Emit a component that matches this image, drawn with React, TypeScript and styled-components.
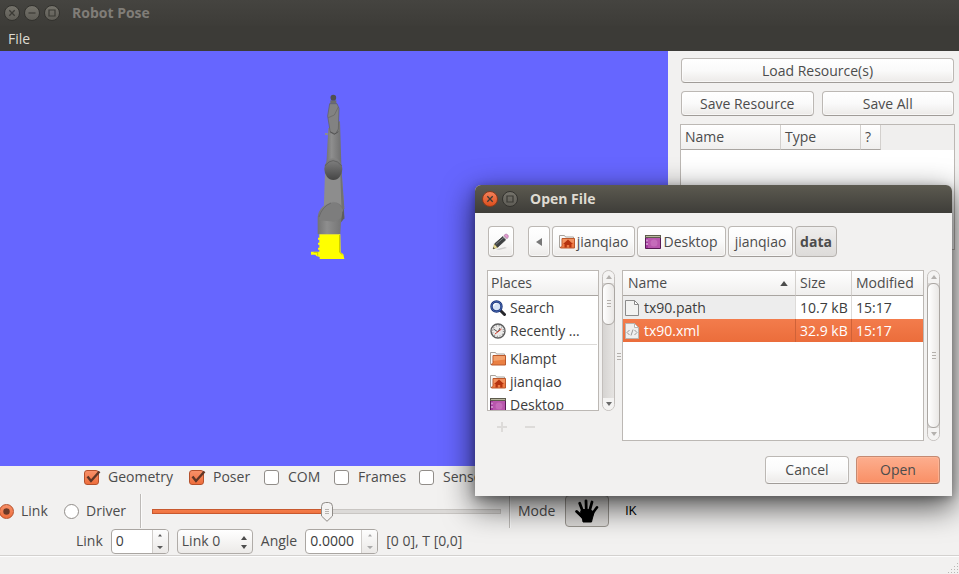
import React, { useState } from "react";
import styled, { createGlobalStyle, css } from "styled-components";

const font = `"Open Sans", "Noto Sans", sans-serif`;
const ink = "#4c4c4c";
const face = "#f2f1f0";

const GlobalStyle = createGlobalStyle`
  *, *::before, *::after { box-sizing: border-box; }
  html, body { margin: 0; padding: 0; }
  body { background: ${face}; color: ${ink}; font: 14px/20px ${font}; overflow: hidden; }
  button, input, select { font: inherit; color: inherit; margin: 0; }
  svg { display: block; flex: none; }
`;

/* ---------- shared controls ---------- */

const Button = styled.button<{ $tone?: "accent" | "pressed"; $width?: number; $height?: number; $grow?: boolean }>`
  display: flex;
  align-items: center;
  justify-content: center;
  gap: 2px;
  height: ${(p) => p.$height ?? 25}px;
  ${(p) => p.$width && css`width: ${p.$width}px;`}
  ${(p) => p.$grow && css`flex: 1;`}
  padding: 0;
  white-space: nowrap;
  border: 1px solid #bcb8b4;
  border-bottom-color: #a09c98;
  border-radius: 4px;
  background: linear-gradient(#fff, #fafafa 50%, #eceae8);
  box-shadow: inset 0 0 0 1px rgba(255, 255, 255, 0.6);
  ${(p) =>
    p.$tone === "accent" &&
    css`
      border-color: #c58a72;
      border-bottom-color: #9c6a56;
      background: linear-gradient(#fdae8e, #f98f65);
      box-shadow: inset 0 0 0 1px rgba(255, 190, 160, 0.6);
    `}
  ${(p) =>
    p.$tone === "pressed" &&
    css`
      font-weight: 700;
      border-color: #b5b1ad;
      background: linear-gradient(#efeeed, #dddbd9);
      box-shadow: none;
    `}
`;

const Caption = styled.span`
  white-space: nowrap;
`;

const Divider = styled.span`
  width: 2px;
  height: 34px;
  border-left: 1px solid #bdbab7;
  border-right: 1px solid #fbfbfb;
`;

/* ---------- application window ---------- */

const Window = styled.div`
  position: relative;
  display: flex;
  flex-direction: column;
  min-height: 100vh;
`;

const TitleBar = styled.header<{ $dialog?: boolean }>`
  display: flex;
  align-items: center;
  gap: 4px;
  height: ${(p) => (p.$dialog ? 28 : 26)}px;
  padding: 0 ${(p) => (p.$dialog ? 7 : 4)}px;
  background: ${(p) => (p.$dialog ? "linear-gradient(#5c5a50, #3e3d39)" : "linear-gradient(#454440, #3d3c38)")};
  border-radius: ${(p) => (p.$dialog ? "6px 6px 0 0" : "0")};
  color: ${(p) => (p.$dialog ? "#dfdbd2" : "#807d78")};
`;

const Title = styled.h1`
  margin: 0 0 0 8px;
  font: 700 14px/20px ${font};
`;

const WindowButton = styled.button<{ $close?: boolean }>`
  display: grid;
  place-items: center;
  width: 16px;
  height: 16px;
  padding: 0;
  border: 1px solid ${(p) => (p.$close ? "#8c3a1c" : "#33322e")};
  border-radius: 50%;
  background: ${(p) => (p.$close ? "linear-gradient(#f4815a, #dd4f1d)" : "linear-gradient(#75736b, #5f5d56)")};
  color: #3b3a35;
`;

const MenuBar = styled.nav`
  display: flex;
  align-items: center;
  height: 25px;
  padding: 0 8px;
  background: #3c3b37;
`;

const MenuItem = styled.button`
  padding: 0;
  border: 0;
  background: none;
  && { color: #dfdbd2; }
`;

const Body = styled.div`
  flex: 1;
  display: grid;
  grid-template-columns: minmax(0, 1fr) 291px;
`;

const Workspace = styled.main`
  display: flex;
  flex-direction: column;
`;

const Viewport = styled.div`
  flex: 1;
  display: flex;
  justify-content: center;
  align-items: flex-start;
  padding-top: 34px;
  background: #6666ff;
`;

const SidePanel = styled.aside`
  display: flex;
  flex-direction: column;
  gap: 8px;
  padding: 7px 4px 0 12px;
`;

const ButtonRow = styled.div`
  display: flex;
  gap: 8px;
  padding: 0 1px;
`;

const ResourceBox = styled.div`
  height: 126px;
  background: #fff;
  border: 1px solid #bcb8b4;
`;

const ResourceTable = styled.table`
  width: 100%;
  border-collapse: separate;
  border-spacing: 0;
  table-layout: fixed;
`;

const HeadCell = styled.th<{ $width?: number }>`
  ${(p) => p.$width && css`width: ${p.$width}px;`}
  height: 25px;
  padding: 0 4px;
  text-align: left;
  font-weight: 400;
  white-space: nowrap;
  border-right: 1px solid #d3d0cd;
  border-bottom: 1px solid #a9a5a1;
  background: linear-gradient(#fff, #f0efee);
`;

const BlankHead = styled.td`
  background: #f0efee;
`;

/* ---------- control strip ---------- */

const Controls = styled.section`
  display: flex;
  flex-direction: column;
`;

const CheckRow = styled.div`
  display: grid;
  grid-template-columns: 105px 75px 70px 85px 100px;
  align-items: center;
  height: 22px;
  padding-left: 84px;
`;

const Check = styled.label`
  display: flex;
  align-items: center;
  gap: 7px;
`;

const Mark = styled.span`
  display: grid;
  > * { grid-area: 1 / 1; }
  > svg { pointer-events: none; visibility: hidden; }
  > input:checked + svg { visibility: visible; }
`;

const Box = styled.input`
  appearance: none;
  width: 15px;
  height: 15px;
  border: 1px solid #918d89;
  border-radius: ${(p) => (p.type === "radio" ? "50%" : "3px")};
  background: #fff;
  &:checked {
    border-color: #b5512c;
    background: linear-gradient(#f79069, #ee6e3c);
  }
`;

const PoseRow = styled.div`
  display: flex;
  align-items: center;
  height: 34px;
  margin-top: 6px;
  padding-right: 15px;
`;

const RadioGroup = styled.div`
  display: grid;
  grid-template-columns: 65px 76px;
  margin-left: -1px;
`;

const Slider = styled.input<{ $fill: number }>`
  appearance: none;
  flex: 1;
  min-width: 0;
  height: 20px;
  && { margin: 0 8px 0 10px; }
  background: none;
  &::-webkit-slider-runnable-track {
    height: 5px;
    border: 1px solid #bdb9b5;
    border-radius: 3px;
    background: linear-gradient(#f5804e, #ef6f3c) 0 0 / ${(p) => p.$fill}% 100% no-repeat border-box, #dcdad8;
    border-color: #c9c6c3;
    ${(p) => css`border-image: linear-gradient(to right, #c8592f ${p.$fill}%, #c9c6c3 ${p.$fill}%) 1;`}
  }
  &::-webkit-slider-thumb {
    appearance: none;
    width: 12px;
    height: 20px;
    margin-top: -8px;
    background:
      linear-gradient(#b8b4b0, #b8b4b0) 4px 7px / 4px 1px no-repeat,
      linear-gradient(#b8b4b0, #b8b4b0) 4px 9px / 4px 1px no-repeat,
      linear-gradient(#b8b4b0, #b8b4b0) 4px 11px / 4px 1px no-repeat,
      url("data:image/svg+xml,%3Csvg xmlns='http://www.w3.org/2000/svg' width='12' height='20'%3E%3Cpath d='M.5 4.5a4 4 0 0 1 4-4h3a4 4 0 0 1 4 4V14L6 19.3.5 14z' fill='%23f4f3f2' stroke='%238f8b87'/%3E%3C/svg%3E") no-repeat;
  }
`;

const ModeGroup = styled.div`
  display: flex;
  align-items: center;
`;

const ModeLabel = styled.span`
  width: 54px;
  padding-left: 7px;
`;

const ModeButton = styled.button<{ $active?: boolean }>`
  display: grid;
  place-items: center;
  width: 44px;
  height: 32px;
  padding: 0;
  border: 1px solid ${(p) => (p.$active ? "#99958f" : "transparent")};
  border-radius: 4px;
  background: ${(p) => (p.$active ? "#dcdad8" : "none")};
  && {
    color: #000;
    font: 12px/16px "Liberation Sans", sans-serif;
  }
`;

const JointRow = styled.div`
  display: flex;
  align-items: center;
  gap: 8px;
  height: 26px;
  margin: 0 0 1px 76px;
`;

const Field = styled.label`
  display: flex;
  align-items: center;
  gap: 8px;
`;

const Spin = styled.span<{ $width: number }>`
  display: flex;
  width: ${(p) => p.$width}px;
  height: 25px;
  overflow: hidden;
  border: 1px solid #aaa6a2;
  border-radius: 4px;
  background: #fff;
`;

const SpinInput = styled.input`
  flex: 1;
  min-width: 0;
  padding: 0 4px;
  border: 0;
  background: none;
  && { color: #3c3c3c; }
`;

const SpinArrows = styled.span<{ $dim?: boolean }>`
  display: grid;
  place-items: center;
  width: 16px;
  border-left: 1px solid #d0cdca;
  background: linear-gradient(#fdfdfd, #ebe9e7);
  color: ${(p) => (p.$dim ? "#aaa" : "#5a5a5a")};
`;

const Combo = styled.span`
  display: grid;
  align-items: center;
  width: 76px;
  > * { grid-area: 1 / 1; }
  > svg { justify-self: end; margin-right: 5px; pointer-events: none; }
`;

const ComboSelect = styled.select`
  appearance: none;
  height: 25px;
  padding: 0 4px;
  border: 1px solid #b0aca8;
  border-radius: 4px;
  background: linear-gradient(#fff, #eceae8);
`;

const StatusBar = styled.footer`
  display: flex;
  justify-content: flex-end;
  align-items: flex-end;
  height: 19px;
  border-top: 1px solid #d3d1cf;
  box-shadow: inset 0 1px 0 #fdfdfd;
`;

/* ---------- file chooser ---------- */

const Dialog = styled.section`
  position: absolute;
  left: 475px;
  top: 185px;
  width: 477px;
  border-radius: 6px 6px 0 0;
  background: ${face};
  box-shadow: 0 10px 30px 2px rgba(0, 0, 0, 0.65), 0 2px 8px rgba(0, 0, 0, 0.25);
`;

const DialogBody = styled.div`
  display: flex;
  flex-direction: column;
  padding: 13px 12px 12px;
`;

const PathBar = styled.div`
  display: flex;
  gap: 2px;
  margin-left: 1px;
`;

const PencilSlot = styled.span`
  margin-right: 12px;
`;

const Panes = styled.div`
  display: flex;
  margin-top: 13px;
`;

const PlacesPane = styled.div`
  width: 112px;
`;

const PlacesBox = styled.div`
  height: 141px;
  overflow: hidden;
  border: 1px solid #bcb8b4;
  background: #fff;
`;

const PlacesHead = styled.div`
  height: 25px;
  padding: 2px 3px;
  border-bottom: 1px solid #a9a5a1;
  background: linear-gradient(#fff, #f0efee);
`;

const PlacesList = styled.ul`
  margin: 0;
  padding: 0;
  list-style: none;
`;

const Place = styled.li<{ $first?: boolean }>`
  display: flex;
  align-items: center;
  gap: 4px;
  height: 23px;
  padding-left: 2px;
  white-space: nowrap;
  color: #3c3c3c;
`;

const PlaceRule = styled.li`
  height: 1px;
  margin: 2px 1px;
  background: #dcdad8;
`;

const PlaceTools = styled.div`
  display: flex;
  gap: 16px;
  padding: 10px 9px;
`;

const ToolButton = styled.button`
  display: grid;
  width: 12px;
  height: 12px;
  padding: 0;
  border: 0;
  background: none;
`;

const ScrollTrack = styled.div`
  display: flex;
  flex-direction: column;
  align-items: center;
  width: 13px;
  border: 1px solid #c3bfbc;
  border-radius: 7px;
  background: linear-gradient(to right, #d6d4d2, #e6e4e2);
`;

const ScrollEnd = styled.span<{ $bottom?: boolean; $dim?: boolean }>`
  display: grid;
  place-items: center;
  width: 11px;
  height: 12px;
  background: #f4f3f2;
  border-radius: ${(p) => (p.$bottom ? "0 0 6px 6px" : "6px 6px 0 0")};
  color: ${(p) => (p.$dim ? "#b4b1ae" : "#6a6a6a")};
`;

const ScrollThumb = styled.span<{ $size?: number }>`
  display: grid;
  place-items: center;
  width: 13px;
  ${(p) => (p.$size ? css`height: ${p.$size}px; margin-bottom: auto;` : css`flex: 1;`)}
  border: 1px solid #aaa6a2;
  border-radius: 6px;
  background: linear-gradient(to right, #fff, #e9e7e5);
`;

const PlacesScroll = styled.div`
  display: flex;
  height: 141px;
  margin-left: 3px;
`;

const Grip = styled.div`
  display: grid;
  place-items: center;
  width: 7px;
`;

const FilesBox = styled.div`
  flex: 1;
  height: 171px;
  border: 1px solid #bcb8b4;
  background: #fff;
`;

const FilesScroll = styled.div`
  display: flex;
  height: 171px;
  margin-left: 3px;
`;

const FilesTable = styled(ResourceTable)`
  th:last-child, td:last-child { border-right: 0; }
`;

const HeadInner = styled.span`
  display: flex;
  align-items: center;
  justify-content: space-between;
  padding: 0 3px 0 1px;
`;

const FileRow = styled.tr<{ $selected?: boolean }>`
  color: ${(p) => (p.$selected ? "#fff" : "#3c3c3c")};
  background: ${(p) => (p.$selected ? "linear-gradient(#f37c4c, #eb6d3b)" : "#fff")};
  td:first-child { ${(p) => !p.$selected && css`background: #ededed;`} }
  td { border-right: 1px solid ${(p) => (p.$selected ? "#cf6238" : "#dddbd9")}; }
`;

const Cell = styled.td`
  height: 23px;
  padding: 0 4px;
  white-space: nowrap;
`;

const FileName = styled.span`
  display: flex;
  align-items: center;
  gap: 5px;
  margin-left: -2px;
`;

const Actions = styled.div`
  display: flex;
  justify-content: flex-end;
  gap: 7px;
  margin-top: 13px;
`;

/* ---------- drawings ---------- */

const Cross = () => (
  <svg width="8" height="8" viewBox="0 0 8 8" stroke="currentColor" strokeWidth="1.3"><path d="M1.3 1.3l5.4 5.4M6.7 1.3L1.3 6.7" /></svg>
);
const Dash = () => (
  <svg width="8" height="8" viewBox="0 0 8 8" stroke="currentColor" strokeWidth="1.2"><path d="M.5 4h7" /></svg>
);
const Square = () => (
  <svg width="8" height="8" viewBox="0 0 8 8" fill="none" stroke="currentColor" strokeWidth="1.2"><path d="M1 1h6v6H1z" /></svg>
);
const Arrow = ({ down, size = 6 }: { down?: boolean; size?: number }) => (
  <svg width={size} height={size / 2 + 1} viewBox="0 0 6 4" fill="currentColor"><path d={down ? "M0 0h6L3 4z" : "M0 4h6L3 0z"} /></svg>
);
const UpDown = ({ wide }: { wide?: boolean }) => (
  <svg width="8" height="18" viewBox="0 0 8 18" fill="currentColor">
    {wide ? <path d="M1 8h6L4 4zM1 13h6l-3 4z" /> : <path d="M2 4.500h4L4 2zM1 14h6l-3 3z" />}
  </svg>
);
const Lines = ({ width = 4, height = 8 }: { width?: number; height?: number }) => (
  <svg width={width} height={height} viewBox="0 0 4 8" stroke="#b4b0ac"><path d="M0 .5h4M0 3.500h4M0 6.500h4" /></svg>
);
const Tick = () => (
  <svg width="17" height="15" viewBox="0 0 17 15" fill="none" stroke="#5f3626" strokeWidth="2.400"><path d="M3.500 6.500l3.500 4.500 8.500-9.500" /></svg>
);
const Dot = () => (
  <svg width="15" height="15" viewBox="0 0 15 15"><circle cx="7.500" cy="7.500" r="3.200" fill="#6b3a28" /></svg>
);
const Pencil = () => (
  <svg width="18" height="18" viewBox="0 0 18 18">
    <path d="M4 16.200l9-2.200 2 1-8 2z" fill="#000" opacity=".15" />
    <path d="M1 16l1.500-5 3 3.400z" fill="#efe39a" stroke="#a89c55" strokeWidth=".6" />
    <path d="M1 16l.6-2 1.300 1.400z" fill="#333" />
    <path d="M2.600 10.800L10.800 3.600l3 3.200-8.200 7.500z" fill="#3e4143" stroke="#222" strokeWidth=".6" />
    <path d="M4 11.200l8-6.800" stroke="#85898c" strokeWidth=".9" />
    <path d="M10.800 3.600l1.300-1.200 3 3.200-1.300 1.200z" fill="#c9c9c9" />
    <path d="M12.100 2.400c1.200-1.500 2.500-1.600 3.500-.6s.9 2.500-.5 3.800z" fill="#e49bd2" stroke="#9d5d90" strokeWidth=".6" />
  </svg>
);
const Folder = ({ home }: { home?: boolean }) => (
  <svg width="16" height="16" viewBox="0 0 16 16">
    <path d="M.5 13.500v-12h5l1 1.500h8v10.500z" fill="#fafafa" stroke="#a8a29c" />
    <path d="M3 4.500h12.500v9.500H1.500V13c1.200 0 1.500-1 1.500-2z" fill={home ? "#ee7a45" : "#ea8043"} stroke="#b9582c" />
    <path d="M3.500 5h11.500v3.500L3.500 10z" fill="#f8b183" opacity={home ? 0.4 : 0.65} />
    {home && <path d="M9 5.500L4 10h1.500v3.500h2.300V11h2.400v2.500h2.300V10H14z" fill="#b5330f" />}
  </svg>
);
const DesktopIcon = () => (
  <svg width="16" height="14" viewBox="0 0 16 14">
    <path d="M.5.500h15v13H.5z" fill="#a43aa0" stroke="#581a55" />
    <path d="M3 3h12v10H3z" fill="#b856ad" />
    <circle cx="9" cy="8" r="3.500" fill="#cf80c4" opacity=".55" />
    <path d="M0 0h16v3H0z" fill="#5d5b4c" /><path d="M1 1h14v1H1z" fill="#b8b69e" />
    <path d="M1.500 4.500h1v2h-1zM1.500 8h1v2h-1z" fill="#f1dff0" />
  </svg>
);
const SearchIcon = () => (
  <svg width="16" height="16" viewBox="0 0 16 16">
    <path d="M10 10l4.500 4.500" stroke="#26262b" strokeWidth="3" strokeLinecap="round" />
    <circle cx="6.500" cy="6.500" r="5" fill="#d5e2f5" stroke="#1d3678" strokeWidth="2.400" />
    <circle cx="6.500" cy="6.500" r="5" fill="none" stroke="#4b6dbb" strokeWidth=".8" />
    <path d="M3.600 6.200a3 3 0 0 1 3-2.700" fill="none" stroke="#fff" strokeWidth="1.200" />
  </svg>
);
const Clock = () => (
  <svg width="16" height="16" viewBox="0 0 16 16">
    <circle cx="8" cy="8" r="7" fill="#ecebea" stroke="#5d5d5d" strokeWidth="1.400" />
    <circle cx="8" cy="8" r="5.400" fill="none" stroke="#888" strokeWidth="1.200" strokeDasharray="1 1.830" />
    <path d="M3.500 6l4.500 3 2-4" fill="none" stroke="#555" />
    <path d="M5 11l6.500-5" stroke="#d9402f" />
  </svg>
);
const Sheet = ({ code }: { code?: boolean }) => (
  <svg width="14" height="16" viewBox="0 0 14 16">
    <path d="M.5.500h9l4 4v11H.5z" fill={code ? "#efefee" : "#f3f3f2"} stroke={code ? "#b9b5b1" : "#8b8b8b"} />
    <path d="M9.500.500v4h4z" fill="#fff" stroke={code ? "#b9b5b1" : "#8b8b8b"} />
    {code && <path d="M4.500 7L2 9.500 4.500 12M9.500 7L12 9.500 9.500 12M8 6.500l-2 6" fill="none" stroke="#999" />}
  </svg>
);
const Hand = () => (
  <svg width="24" height="24" viewBox="0 0 24 24" fill="none" stroke="#000" strokeLinecap="round">
    <path d="M8 13L4.700 4.200" strokeWidth="2.800" />
    <path d="M11.300 12L11 1.800" strokeWidth="2.800" />
    <path d="M14.500 12l2.500-9" strokeWidth="2.800" />
    <path d="M17 15l5-6.700" strokeWidth="2.600" />
    <path d="M8 18.500l-6.300-6" strokeWidth="3" />
    <path d="M7 10.500l9 .2 3 3-1.800 6.300-.7 3H8l-.5-3.200L4.500 16z" fill="#000" strokeWidth="1" />
  </svg>
);
const SizeGrip = () => (
  <svg width="11" height="11" viewBox="0 0 11 11" fill="#bab7b4">
    {[0, 1, 2, 3].flatMap((r) =>
      Array.from({ length: r + 1 }, (_, c) => <rect key={`${r}-${c}`} x={9 - c * 3} y={r * 3} width="1" height="1" />)
    )}
  </svg>
);
const Robot = () => (
  <svg width="90" height="185" viewBox="0 0 270 555" role="img" aria-label="Robot arm">
    <defs>
      <linearGradient id="arm"><stop offset="0" stopColor="#747474" /><stop offset=".35" stopColor="#8e8e8e" /><stop offset="1" stopColor="#6f6f6f" /></linearGradient>
      <linearGradient id="joint" x2="0" y2="1"><stop offset="0" stopColor="#858585" /><stop offset="1" stopColor="#454545" /></linearGradient>
    </defs>
    <path d="M124 46h18v10h-18z" fill="#6c6c6c" />
    <circle cx="133" cy="38" r="8.500" fill="#505050" />
    <path d="M108 144h8v6h-8z" fill="#8d8d8d" />
    <path d="M118 130l-6 108h45l-4-130z" fill="url(#arm)" />
    <path d="M122 56h22l6 14-2 62-8 14-16-3-8-50z" fill="#828282" stroke="#5e5e5e" strokeWidth="2" />
    <path d="M118 98l18-8 12-24" fill="none" stroke="#626262" strokeWidth="2" />
    <path d="M124 140l12 8 12-8" fill="none" stroke="#555" strokeWidth="3" />
    <path d="M108 262h50l8 108-62 12z" fill="#8d8d8d" />
    <path d="M154 270l4-8 8 108-8 16z" fill="#727272" />
    <ellipse cx="133" cy="252" rx="27" ry="33" fill="url(#joint)" />
    <path d="M108 242q24-30 50 0" fill="none" stroke="#555" strokeWidth="2" />
    <path d="M86 448v-52q2-18 14-30 14-15 33-16 22 2 32 24l1 24-10 14-2 36z" fill="url(#arm)" />
    <path d="M90 392q6-22 24-34 20-10 38 2l12 18-6 20-22 12-44-4z" fill="#7d7d7d" />
    <path d="M90 396q10-32 36-42" fill="none" stroke="#5f5f5f" strokeWidth="2" />
    <path d="M164 372l2 28-10 12 4-30z" fill="#5e5e5e" />
    <path d="M91 448h63l1 54 8 6 3 14H92v-6l-10-3-3-4H66v-9h25v-6h-4v-6h4v-9h-4v-6h4v-9h-4v-6h4z" fill="#ff0" />
    <path d="M152 450v52l8 7" fill="none" stroke="#a3a300" strokeWidth="2" />
    <path d="M74 502h12v10" fill="none" stroke="#b4b400" strokeWidth="2" />
  </svg>
);

/* ---------- composed parts ---------- */

const Option = ({ type = "checkbox", name, label, on }: { type?: string; name?: string; label: string; on?: boolean }) => (
  <Check>
    <Mark>
      <Box type={type} name={name} defaultChecked={on} />
      {type === "radio" ? <Dot /> : <Tick />}
    </Mark>
    <Caption>{label}</Caption>
  </Check>
);

const ScrollBar = ({ thumb, atEnd }: { thumb?: number; atEnd?: boolean }) => (
  <ScrollTrack>
    <ScrollEnd $dim><Arrow /></ScrollEnd>
    <ScrollThumb $size={thumb}><Lines /></ScrollThumb>
    <ScrollEnd $bottom $dim={atEnd}><Arrow down /></ScrollEnd>
  </ScrollTrack>
);

const SpinBox = ({ width, value, label, dim }: { width: number; value: string; label: string; dim?: boolean }) => (
  <Spin $width={width}>
    <SpinInput aria-label={label} defaultValue={value} inputMode="decimal" />
    <SpinArrows $dim={dim}><UpDown /></SpinArrows>
  </Spin>
);

const places = [
  { label: "Search", icon: <SearchIcon /> },
  { label: "Recently …", icon: <Clock /> },
  null,
  { label: "Klampt", icon: <Folder /> },
  { label: "jianqiao", icon: <Folder home /> },
  { label: "Desktop", icon: <DesktopIcon /> },
];

const files = [
  { name: "tx90.path", size: "10.7 kB", modified: "15:17" },
  { name: "tx90.xml", size: "32.9 kB", modified: "15:17", code: true },
];

const OpenDialog = () => {
  const [selected, setSelected] = useState("tx90.xml");
  return (
    <Dialog role="dialog" aria-label="Open File">
      <TitleBar $dialog>
        <WindowButton $close aria-label="Close"><Cross /></WindowButton>
        <WindowButton aria-label="Maximize"><Square /></WindowButton>
        <Title as="h2">Open File</Title>
      </TitleBar>
      <DialogBody>
        <PathBar>
          <PencilSlot><Button $width={26} $height={31} aria-label="Type a file name"><Pencil /></Button></PencilSlot>
          <Button $width={22} $height={31} aria-label="Back">
            <svg width="6" height="8" viewBox="0 0 6 8" fill="#777"><path d="M6 0v8L0 4z" /></svg>
          </Button>
          <Button $width={83} $height={31}><Folder home />jianqiao</Button>
          <Button $width={89} $height={31}><DesktopIcon />Desktop</Button>
          <Button $width={65} $height={31}>jianqiao</Button>
          <Button $width={42} $height={31} $tone="pressed">data</Button>
        </PathBar>
        <Panes>
          <PlacesPane>
            <PlacesBox>
              <PlacesHead>Places</PlacesHead>
              <PlacesList>
                {places.map((p, i) => (p ? <Place key={i}>{p.icon}{p.label}</Place> : <PlaceRule key={i} />))}
              </PlacesList>
            </PlacesBox>
            <PlaceTools>
              <ToolButton aria-label="Add bookmark">
                <svg width="12" height="12" viewBox="0 0 12 12" stroke="#dddbd9" strokeWidth="2"><path d="M1 6h10M6 1v10" /></svg>
              </ToolButton>
              <ToolButton aria-label="Remove bookmark">
                <svg width="12" height="12" viewBox="0 0 12 12" stroke="#dddbd9" strokeWidth="2"><path d="M1 6h10" /></svg>
              </ToolButton>
            </PlaceTools>
          </PlacesPane>
          <PlacesScroll><ScrollBar thumb={42} /></PlacesScroll>
          <Grip><Lines width={4} height={8} /></Grip>
          <FilesBox>
            <FilesTable>
              <thead>
                <tr>
                  <HeadCell><HeadInner>Name<Arrow size={8} /></HeadInner></HeadCell>
                  <HeadCell $width={56}>Size</HeadCell>
                  <HeadCell $width={71}>Modified</HeadCell>
                </tr>
              </thead>
              <tbody>
                {files.map((f) => (
                  <FileRow key={f.name} $selected={f.name === selected} onClick={() => setSelected(f.name)}>
                    <Cell><FileName><Sheet code={f.code} />{f.name}</FileName></Cell>
                    <Cell>{f.size}</Cell>
                    <Cell>{f.modified}</Cell>
                  </FileRow>
                ))}
              </tbody>
            </FilesTable>
          </FilesBox>
          <FilesScroll><ScrollBar atEnd /></FilesScroll>
        </Panes>
        <Actions>
          <Button $width={84} $height={28}>Cancel</Button>
          <Button $width={84} $height={28} $tone="accent">Open</Button>
        </Actions>
      </DialogBody>
    </Dialog>
  );
};

export default function App() {
  const [pose, setPose] = useState(50);
  return (
    <Window>
      <GlobalStyle />
      <TitleBar>
        <WindowButton aria-label="Close"><Cross /></WindowButton>
        <WindowButton aria-label="Minimize"><Dash /></WindowButton>
        <WindowButton aria-label="Maximize"><Square /></WindowButton>
        <Title>Robot Pose</Title>
      </TitleBar>
      <MenuBar><MenuItem>File</MenuItem></MenuBar>
      <Body>
        <Workspace>
          <Viewport><Robot /></Viewport>
          <Controls>
            <CheckRow>
              <Option label="Geometry" on />
              <Option label="Poser" on />
              <Option label="COM" />
              <Option label="Frames" />
              <Option label="Sensors" />
            </CheckRow>
            <PoseRow>
              <RadioGroup>
                <Option type="radio" name="target" label="Link" on />
                <Option type="radio" name="target" label="Driver" />
              </RadioGroup>
              <Divider />
              <Slider
                type="range"
                aria-label="Joint position"
                value={pose}
                $fill={pose}
                onChange={(e) => setPose(Number(e.target.value))}
              />
              <ModeGroup>
                <Divider />
                <ModeLabel>Mode</ModeLabel>
                <ModeButton $active aria-label="Pose mode"><Hand /></ModeButton>
                <ModeButton>IK</ModeButton>
              </ModeGroup>
            </PoseRow>
            <JointRow>
              <Field>Link<SpinBox width={58} value="0" label="Link" /></Field>
              <Combo>
                <ComboSelect aria-label="Link name"><option>Link 0</option></ComboSelect>
                <UpDown wide />
              </Combo>
              <Field>Angle<SpinBox width={73} value="0.0000" label="Angle" dim /></Field>
              <Caption>[0 0], T [0,0]</Caption>
            </JointRow>
          </Controls>
        </Workspace>
        <SidePanel>
          <ButtonRow><Button $grow>Load Resource(s)</Button></ButtonRow>
          <ButtonRow>
            <Button $grow>Save Resource</Button>
            <Button $grow>Save All</Button>
          </ButtonRow>
          <ResourceBox>
            <ResourceTable>
              <thead>
                <tr>
                  <HeadCell $width={100}>Name</HeadCell>
                  <HeadCell $width={80}>Type</HeadCell>
                  <HeadCell $width={20}>?</HeadCell>
                  <BlankHead />
                </tr>
              </thead>
            </ResourceTable>
          </ResourceBox>
        </SidePanel>
      </Body>
      <StatusBar><SizeGrip /></StatusBar>
      <OpenDialog />
    </Window>
  );
}
